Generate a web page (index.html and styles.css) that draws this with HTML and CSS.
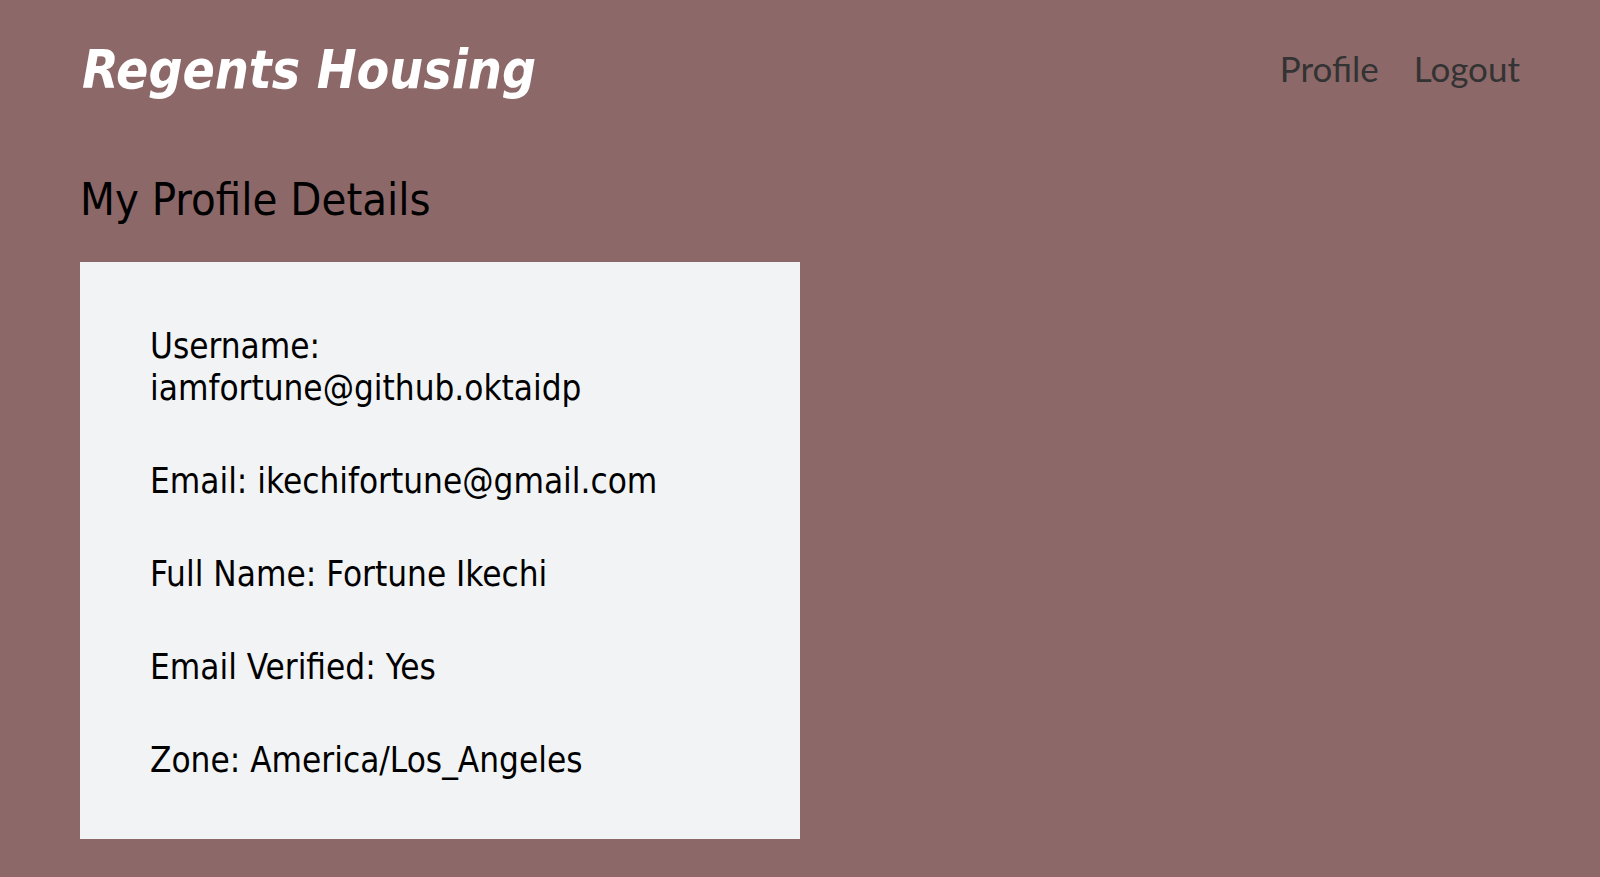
FILE: index.html
```html
<!DOCTYPE html>
<html lang="en">
<head>
<meta charset="utf-8">
<title>Regents Housing</title>
<link rel="stylesheet" href="styles.css">
</head>
<body>
<header class="header">
  <div class="brand">Regents Housing</div>
  <nav class="nav">
    <a class="nav-link" href="#">Profile</a>
    <a class="nav-link" href="#">Logout</a>
  </nav>
</header>
<main class="main">
  <h1 class="title">My Profile Details</h1>
  <section class="card">
    <p class="row">Username: iamfortune@github.oktaidp</p>
    <p class="row">Email: ikechifortune@gmail.com</p>
    <p class="row">Full Name: Fortune Ikechi</p>
    <p class="row">Email Verified: Yes</p>
    <p class="row">Zone: America/Los_Angeles</p>
  </section>
</main>
</body>
</html>
```
FILE: styles.css
```css
html, body {
  margin: 0;
  padding: 0;
}
body {
  background: #8d6868;
  font-family: "DejaVu Sans Condensed", "DejaVu Sans", sans-serif;
  color: #000;
  min-height: 877px;
}
.header {
  display: flex;
  justify-content: space-between;
  align-items: flex-start;
  padding: 40px 80px 0 82px;
}
.brand {
  font-size: 53px;
  line-height: 60px;
  font-weight: bold;
  font-style: italic;
  color: #fff;
}
.nav {
  display: flex;
  gap: 35px;
  margin-top: 8px;
}
.nav-link {
  font-family: Lato, "Open Sans", sans-serif;
  font-size: 35px;
  line-height: 40px;
  color: #333;
  text-decoration: none;
}
.main {
  padding: 0 80px;
}
.title {
  margin: 74px 0 36px 0;
  font-size: 45px;
  line-height: 52px;
  font-weight: normal;
}
.card {
  width: 720px;
  box-sizing: border-box;
  background: #f2f3f5;
  padding: 63px 130px 58px 70px;
}
.row {
  margin: 0 0 51px 0;
  font-size: 34.8px;
  line-height: 42px;
}
.row:last-child {
  margin-bottom: 0;
}
```
